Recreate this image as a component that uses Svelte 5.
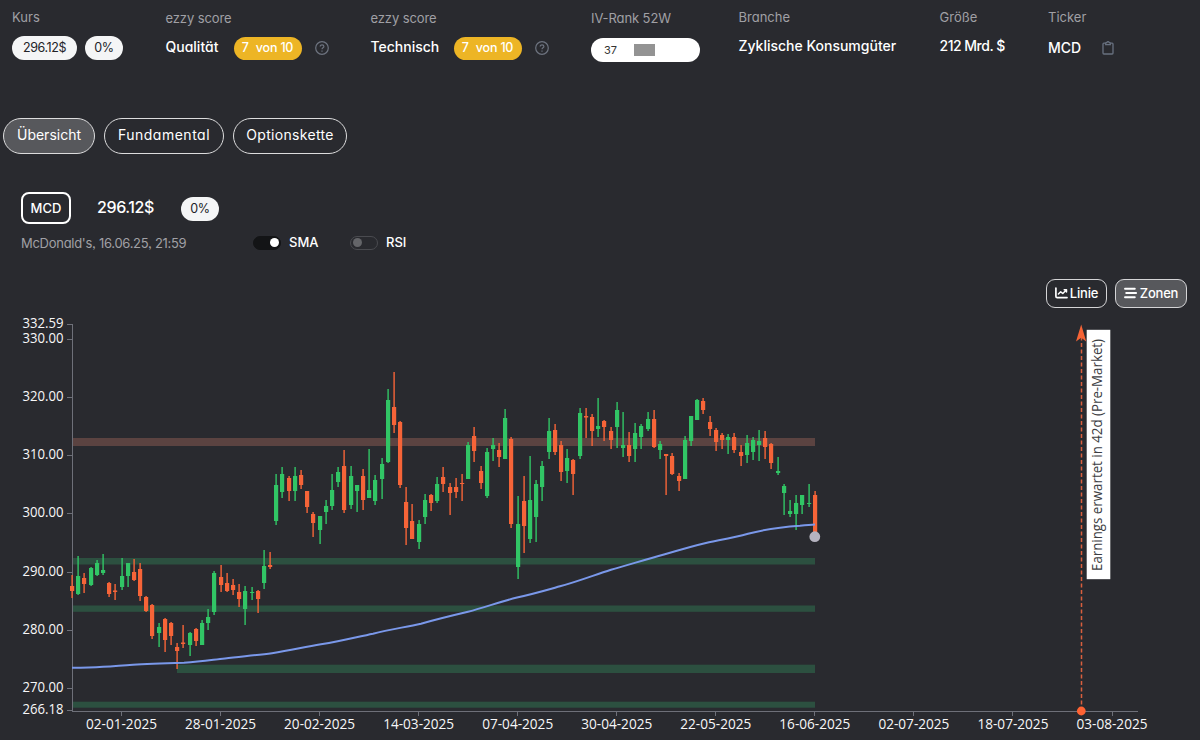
<script lang="ts">
    // [high, body top, body bottom, low, rising] in chart units
    type Candle = [number, number, number, number, 0 | 1];

    const candles: Candle[] = [
        [575, 586, 591, 598, 0], [556, 576, 594, 595, 1], [573, 578, 584, 593, 0], [567, 568, 585, 586, 1],
        [560, 563, 575, 576, 1], [554, 570, 573, 575, 1], [582, 583, 594, 597, 0], [584, 590.5, 592, 600, 0],
        [558, 576, 587, 590, 1], [563, 563, 576, 587, 1], [559, 572, 580, 581, 0], [563, 569, 596, 601, 0],
        [596, 597, 611, 612, 0], [604, 605, 636, 639, 0], [623, 627, 633, 647, 1], [618, 619, 640, 652, 0],
        [622, 623, 636, 645, 0], [643, 647, 651, 669, 0], [625, 642.5, 644, 648, 0], [632, 633, 645, 656, 1],
        [628, 629, 641, 646, 0], [620, 623, 645, 645, 1], [609, 617, 623, 630, 1], [571, 573, 612, 615, 1],
        [565, 577, 585, 592, 0], [573, 583, 591, 592, 0], [579, 585, 590, 595, 0], [584, 592, 599, 607, 0],
        [586, 591, 609, 625, 1], [587, 592, 593, 600, 1], [590, 591, 599, 613, 0], [550, 566, 583, 589, 1],
        [552, 565, 567, 569, 0], [474, 485, 521, 525, 1], [467, 474, 492, 498, 1], [476, 478, 491, 501, 0],
        [467, 476, 491, 501, 1], [470, 475, 485, 489, 0], [491, 491, 507, 513, 0], [512, 514, 523, 537, 0],
        [516, 516, 530, 544, 1], [500, 506, 512, 524, 1], [474, 490, 506, 510, 1], [467, 472, 482, 487, 1],
        [450, 466, 510, 513, 0], [466, 476, 505, 509, 1], [485, 485, 491, 512, 1], [469, 476, 500, 510, 0],
        [449, 490, 498, 498, 1], [475, 480, 501, 505, 1], [458, 464, 479, 499, 1], [389, 400, 462, 463, 1],
        [372, 407, 425, 433, 0], [421, 422, 485, 488, 0], [487, 502, 528, 545, 0], [504, 521, 539, 539, 0],
        [520, 524, 542, 549, 1], [494, 500, 517, 524, 1], [494, 495, 503, 511, 0], [477, 484, 501, 503, 1],
        [467, 477, 484, 492, 0], [483, 487, 493, 515, 0], [478, 487, 492, 498, 0], [474, 483, 484, 501, 0],
        [442, 445, 479, 479, 1], [427, 436, 451, 462, 0], [466, 471, 483, 489, 0], [448, 452, 496, 498, 1],
        [438, 445, 449, 461, 1], [443, 450, 457, 467, 0], [409, 418, 459, 459, 1], [437, 439, 524, 528, 0],
        [496, 524, 567, 579, 1], [476, 501, 526, 553, 0], [456, 500, 539, 543, 1], [480, 484, 517, 542, 1],
        [461, 466, 487, 501, 1], [418, 431, 452, 459, 1], [424, 430, 452, 455, 0], [441, 445, 472, 481, 0],
        [449, 458, 471, 483, 1], [459, 460, 474, 495, 0], [408, 413, 456, 459, 1], [408, 416, 417.5, 438, 0],
        [414, 417, 431, 446, 0], [398, 426, 429, 437, 1], [420, 421, 427, 441, 0], [427, 431, 440, 449, 0],
        [402, 410, 427, 448, 1], [412, 445, 448, 457, 1], [432, 445, 456, 462, 0], [423, 433, 449, 462, 1],
        [424, 426, 437, 449, 1], [412, 419, 429, 431, 1], [410, 419, 447, 448, 0], [441, 444, 450, 459, 1],
        [454, 454, 456, 495, 0], [453, 456, 474, 475, 0], [473, 476, 481, 491, 0], [436, 440, 479, 479, 1],
        [416, 416, 441, 446, 1], [399, 400, 420, 420, 1], [398, 401, 410, 414, 0], [416, 422, 429, 436, 0],
        [428, 430, 442, 451, 0], [433, 435, 440, 449, 0], [434, 437, 440, 454, 1], [433, 437, 450, 453, 0],
        [445, 452, 456, 466, 0], [435, 443, 455, 463, 1], [437, 440, 452, 460, 1], [430, 441, 445, 461, 1],
        [431, 438, 447, 459, 0], [443, 444, 463, 469, 0], [457, 471, 473, 475, 1], [484, 486, 493, 515, 1],
        [500, 511, 514, 517, 1], [495, 503, 514, 530, 1], [495, 495, 505, 514, 1], [484, 503, 504, 507, 1],
        [491, 495, 533, 533, 0]
    ];

    const zones = [
        { x: 72, y: 438, h: 8, kind: 'resistance' },
        { x: 72, y: 558, h: 6.5, kind: 'support' },
        { x: 72, y: 605.5, h: 6.3, kind: 'support' },
        { x: 177, y: 664.7, h: 8.3, kind: 'support' },
        { x: 72, y: 701.7, h: 6, kind: 'support' }
    ];

    const yTicks: [string, number][] = [
        ['332.59', 324.5], ['330.00', 339.5], ['320.00', 397.5], ['310.00', 455.5], ['300.00', 513.5],
        ['290.00', 572.5], ['280.00', 630.5], ['270.00', 688.5], ['266.18', 710.5]
    ];

    const xTicks = [
        '02-01-2025', '28-01-2025', '20-02-2025', '14-03-2025', '07-04-2025', '30-04-2025',
        '22-05-2025', '16-06-2025', '02-07-2025', '18-07-2025', '03-08-2025'
    ];

    const sma = 'M72 667.7C84 667.6 92 667.4 103 666.7C115 666.2 121 665.3 133 664.7C148 663.7 166 663.2 184 662.7C202 661.5 212 659.8 225 658.4C240 656.6 257 655.2 272 653.2C292 650.2 303 647.2 321 644.3C343 640.6 356 637.2 373 633.7C390 629.2 406 627.2 421 623.7C438 619 451 615.8 468 611.8C485 607.5 499 602 517 597.5C533 594 545 590.5 560 586.3C579 581 593 575.5 611 569.7C627 565.2 647 559.2 664 554.5C679 550 694 545.7 709 542.2C722 539.5 735 537.2 748 533.7C764 529.5 783 527 800 525.8C806 525 810 524.5 815 524.4';

    const candleX = (i: number) => Math.round(72 + i * 6.19);

    const scores = ['Qualität', 'Technisch'];
    const tabs = ['Übersicht', 'Fundamental', 'Optionskette'];

    let activeTab = $state('Übersicht');
    let showSma = $state(true);
    let showRsi = $state(false);
    let showZones = $state(true);
</script>

<main>
    <header class="stats">
        <div class="stat">
            <span class="label">Kurs</span>
            <div class="row">
                <span class="pill price-pill">296.12$</span>
                <span class="pill">0%</span>
            </div>
        </div>
        {#each scores as score}
            <div class="stat low">
                <span class="label">ezzy score</span>
                <div class="row score-row">
                    <span class="value score-name" class:wide={score === 'Technisch'}>{score}</span>
                    <span class="score"><b>7</b> von 10</span>
                    <svg class="help" width="14" height="14" viewBox="0 0 14 14">
                        <circle cx="7" cy="7" r="6.3" />
                        <path d="M5.2 5.6C5.2 3.3 8.9 3.4 8.9 5.5C8.9 6.8 7 6.9 7 8.2M7 9.6V10.7" />
                    </svg>
                </div>
            </div>
        {/each}
        <div class="stat low">
            <span class="label">IV-Rank 52W</span>
            <div class="rank"><span>37</span><i></i></div>
        </div>
        <div class="stat">
            <span class="label">Branche</span>
            <span class="value text">Zyklische Konsumgüter</span>
        </div>
        <div class="stat">
            <span class="label">Größe</span>
            <span class="value text size">212 Mrd. $</span>
        </div>
        <div class="stat">
            <span class="label">Ticker</span>
            <div class="row ticker">
                <span class="value">MCD</span>
                <svg width="12" height="14" viewBox="0 0 12 14" fill="none" stroke="#687180" stroke-width="1.3">
                    <path d="M3.5 2.2H1.9Q1 2.2 1 3.1V12.1Q1 13 1.9 13H10.1Q11 13 11 12.1V3.1Q11 2.2 10.1 2.2H8.5" />
                    <path d="M3.7 3.7V2.1Q3.7 1.7 4.1 1.7H4.8Q5.1 .6 6 .6T7.2 1.7H7.9Q8.3 1.7 8.3 2.1V3.7Z" />
                </svg>
            </div>
        </div>
    </header>

    <nav>
        {#each tabs as tab}
            <button class:active={activeTab === tab} onclick={() => (activeTab = tab)}>{tab}</button>
        {/each}
    </nav>

    <section class="quote">
        <div class="quote-line">
            <span class="symbol">MCD</span>
            <span class="price">296.12$</span>
            <span class="pill">0%</span>
        </div>
        <div class="quote-sub">
            <span class="label stamp">McDonald's, 16.06.25, 21:59</span>
            <button class="switch" class:on={showSma} aria-label="SMA" onclick={() => (showSma = !showSma)}><i></i></button>
            <span class="switch-label">SMA</span>
            <button class="switch" class:on={showRsi} aria-label="RSI" onclick={() => (showRsi = !showRsi)}><i></i></button>
            <span class="switch-label">RSI</span>
        </div>
    </section>

    <div class="tools">
        <button class="linie">
            <svg width="13" height="12" viewBox="0 0 13 12" fill="none" stroke="#fff" stroke-linecap="round" stroke-linejoin="round">
                <path d="M.9 1V9.2Q.9 10.6 2.2 10.6H12" stroke-width="1.7" />
                <path d="M3.4 7L5.7 4.8L7.8 6.5L11 3.3M9.2 2.8H11.5V5" stroke-width="1.5" />
            </svg>
            Linie
        </button>
        <button class="zonen" class:active={showZones} onclick={() => (showZones = !showZones)}>
            <svg width="13" height="12" viewBox="0 0 13 12" stroke="#fff" stroke-width="1.9" stroke-linecap="round">
                <path d="M1 1.8H10.8M2.2 6H12.2M1 10.2H10.8" />
            </svg>
            Zonen
        </button>
    </div>

    <svg class="chart" viewBox="0 310 1200 430">
        {#if showZones}
            {#each zones as zone}
                <rect class={zone.kind} x={zone.x} y={zone.y} width={815 - zone.x} height={zone.h} />
            {/each}
        {/if}

        <path class="axis" d="M72.5 324V711.5M72 711.5H1138" />
        {#each yTicks as [text, y]}
            <path class="axis" d="M67 {y}H72" />
            <text x="22.5" y={y + 3.9} textLength="41" lengthAdjust="spacingAndGlyphs">{text}</text>
        {/each}
        {#each xTicks as text, i}
            <path class="axis" d="M{Math.round(122 + i * 99.05) - 0.5} 711V716" />
            <text x={86 + i * 99.05} y="729.3" textLength="71" lengthAdjust="spacingAndGlyphs">{text}</text>
        {/each}

        {#each candles as [high, top, bottom, low, up], i}
            <g class={up ? 'up' : 'down'}>
                <rect x={candleX(i) - 0.6} y={high} width="1.4" height={low - high} />
                <rect x={candleX(i) - 2} y={top} width="4.2" height={bottom - top} />
            </g>
        {/each}

        {#if showSma}
            <path class="sma" d={sma} />
        {/if}
        <circle cx="814.8" cy="536.7" r="5.4" fill="#b5b3bf" />

        <path class="earnings" d="M1081.5 711V336" />
        <path d="M1081.2 324.5L1086.2 341.5L1081.2 337.8L1076 341.5Z" fill="#f66436" />
        <circle cx="1081.3" cy="711" r="4.4" fill="#ff6333" />
        <rect x="1086.7" y="329.8" width="23.6" height="249.4" fill="#fff" />
        <text class="note" transform="translate(1102 571) rotate(-90)" textLength="232" lengthAdjust="spacingAndGlyphs">Earnings erwartet in 42d (Pre-Market)</text>
    </svg>
</main>

<style>
    :global(body) {
        background: #292a2f;
    }

    main {
        width: 1200px;
        height: 740px;
        overflow: hidden;
        background: #292a2f;
        color: #fff;
        font-family: Inter, "Liberation Sans", sans-serif;
        font-feature-settings: "cv11", "ss03";
        font-size: 14px;
        line-height: 20px;
    }

    button {
        padding: 0;
        background: none;
        color: inherit;
        font: inherit;
        font-feature-settings: inherit;
    }

    .stats {
        display: grid;
        grid-template-columns: 153.5px 205px 220.5px 147.5px 201px 108.5px 1fr;
        box-sizing: border-box;
        height: 118px;
        padding: 7px 0 0 12px;
    }

    .stat {
        display: flex;
        flex-direction: column;
        align-items: flex-start;
    }

    .stat.low {
        padding-top: 1px;
    }

    .label {
        color: #a0a0a5;
        font-size: 13px;
    }

    .stat.low .label {
        letter-spacing: -0.1px;
    }

    .row {
        display: flex;
        align-items: center;
        height: 24px;
        margin-top: 9px;
    }

    .score-row {
        margin-top: 8px;
    }

    .value {
        font-weight: 500;
    }

    .value.text {
        margin-top: 9px;
    }

    .value.size {
        letter-spacing: -0.5px;
    }

    .pill {
        width: 38px;
        height: 24px;
        border-radius: 12px;
        background: #f4f5f6;
        color: #222328;
        font-size: 12.5px;
        letter-spacing: -0.4px;
        line-height: 23px;
        text-align: center;
    }

    .price-pill {
        width: 65px;
        margin-right: 8px;
    }

    .score-name {
        width: 68px;
        padding-bottom: 2px;
    }

    .score-name.wide {
        width: 83px;
    }

    .score {
        width: 68px;
        height: 23px;
        margin-right: 13px;
        border-radius: 12px;
        background: #edb525;
        font-size: 12.5px;
        font-weight: 500;
        letter-spacing: -0.2px;
        line-height: 22px;
        text-align: center;
    }

    .score b {
        margin-right: 4px;
        font-weight: 500;
    }

    .help {
        fill: none;
        stroke: #6e7480;
        stroke-width: 1.2;
    }

    .rank {
        display: flex;
        align-items: center;
        box-sizing: border-box;
        width: 109px;
        height: 24px;
        margin-top: 10px;
        padding-left: 13px;
        border-radius: 12px;
        background: #fff;
        color: #333;
        font-size: 11px;
    }

    .rank span {
        width: 30px;
    }

    .rank i {
        width: 21px;
        height: 12px;
        background: #939393;
    }

    .ticker {
        gap: 21px;
    }

    nav {
        display: flex;
        gap: 9px;
        padding-left: 3px;
    }

    nav button {
        height: 36px;
        padding-bottom: 2px;
        border: 1px solid #dcdcdd;
        border-radius: 18px;
    }

    button.active {
        background: #57585c;
    }

    nav button:nth-child(1) {
        width: 92px;
    }

    nav button:nth-child(2) {
        width: 120px;
        letter-spacing: 0.5px;
    }

    nav button:nth-child(3) {
        width: 114px;
        letter-spacing: 0.3px;
    }

    .quote {
        height: 87px;
        padding: 38px 0 0 21px;
    }

    .quote-line {
        display: flex;
        align-items: center;
        height: 32px;
    }

    .symbol {
        box-sizing: border-box;
        width: 50px;
        height: 32px;
        border: 2px solid #fff;
        border-radius: 8px;
        font-size: 13px;
        font-weight: 500;
        line-height: 29px;
        text-align: center;
    }

    .price {
        width: 84px;
        padding: 0 0 2px 26px;
        font-size: 16px;
        font-weight: 500;
        letter-spacing: -0.4px;
    }

    .quote-line .pill {
        margin-top: 1px;
    }

    .quote-sub {
        display: flex;
        align-items: center;
        margin-top: 8px;
    }

    .stamp {
        width: 232px;
        letter-spacing: -0.28px;
    }

    .switch {
        display: flex;
        align-items: center;
        box-sizing: border-box;
        width: 28px;
        height: 14px;
        padding: 0 2px;
        border: 1px solid #4a4b50;
        border-radius: 7px;
    }

    .switch i {
        width: 9px;
        height: 9px;
        border-radius: 50%;
        background: #646569;
    }

    .switch.on {
        justify-content: flex-end;
        padding-right: 1px;
        border-color: #131416;
        background: #131416;
    }

    .switch.on i {
        background: #fff;
    }

    .switch-label {
        width: 61px;
        padding: 0 0 1px 8px;
        font-size: 13px;
        font-weight: 500;
    }

    .tools {
        display: flex;
        justify-content: flex-end;
        gap: 8px;
        padding-right: 13px;
    }

    .tools button {
        display: flex;
        align-items: center;
        justify-content: center;
        gap: 2px;
        height: 29px;
        padding-bottom: 2px;
        border: 1px solid #d4d4d6;
        border-radius: 9px;
        font-size: 13px;
        font-weight: 500;
        letter-spacing: -0.2px;
    }

    .tools .linie {
        width: 61px;
    }

    .tools .zonen {
        width: 72px;
        gap: 3px;
    }

    .chart {
        display: block;
        width: 1200px;
        height: 430px;
        margin-top: 2px;
    }

    .chart text {
        fill: #f7f7f8;
        font-family: "Open Sans", "Noto Sans", sans-serif;
        font-size: 14px;
    }

    .chart .note {
        fill: #3c3d42;
    }

    .axis {
        fill: none;
        stroke: #6e7079;
    }

    .resistance {
        fill: #5b4341;
    }

    .support {
        fill: #2c5040;
    }

    .up {
        fill: #31c565;
    }

    .down {
        fill: #f66438;
    }

    .sma {
        fill: none;
        stroke: #7a98ea;
        stroke-width: 2;
    }

    .earnings {
        stroke: #d95f3e;
        stroke-width: 1.5;
        stroke-dasharray: 4 2.5;
    }
</style>
